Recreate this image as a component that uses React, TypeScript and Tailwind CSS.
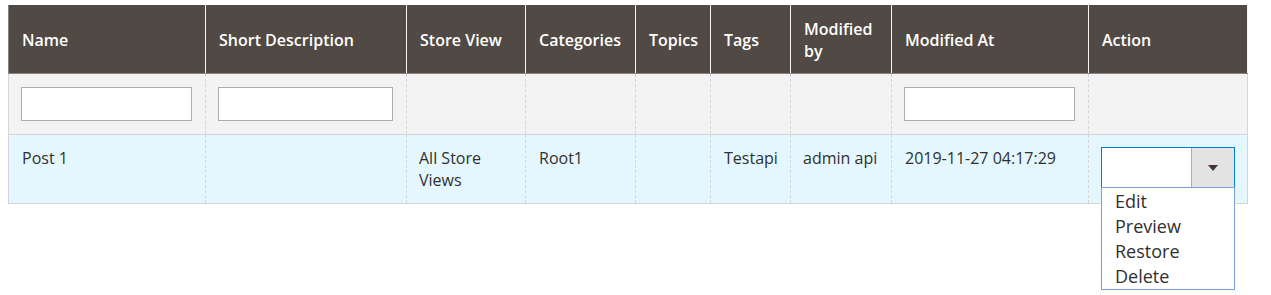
import React from "react";

const cols = "grid grid-cols-[197px_201px_119px_110px_75px_80px_101px_197px_160px]";

const headers = [
  "Name",
  "Short Description",
  "Store View",
  "Categories",
  "Topics",
  "Tags",
  "Modified by",
  "Modified At",
  "Action",
];

export default function App() {
  return (
    <div className="w-[1271px] h-[295px] bg-white font-['Open_Sans',sans-serif] text-[16px] leading-[22px] text-[#303030]">
      <div className="ml-[8px] pt-[5px] w-[1240px]">
        {/* header */}
        <div className={`${cols} bg-[#514943] border-b border-[#8a837f]`}>
          {headers.map((h, i) => (
            <div
              key={h}
              className={`h-[68px] flex items-center pt-[1px] px-[13px] text-white font-semibold ${
                i === 0 ? "border-l border-[#8a837f]" : "border-l border-[#f5f5f5]"
              } ${i === 8 ? "border-r border-r-[#f5f5f5]" : ""}`}
            >
              {h === "Modified by" ? (
                <span>
                  Modified
                  <br />
                  by
                </span>
              ) : (
                h
              )}
            </div>
          ))}
        </div>

        {/* filter row */}
        <div className={`${cols} bg-[#f3f3f3] border-b border-[#d6d6d6]`}>
          {headers.map((h, i) => (
            <div
              key={h}
              className={`h-[60px] pl-[12px] pr-[13px] py-[13px] ${
                i === 0
                  ? "border-l border-[#d6d6d6]"
                  : "border-l border-dashed border-[#d6d6d6]"
              } ${i === 8 ? "relative" : ""}`}
            >
              {(i === 0 || i === 1 || i === 7) && (
                <div className="h-[34px] w-full bg-white border border-[#adadad]" />
              )}
              {i === 8 && (
                <div className="absolute right-0 top-0 bottom-0 w-px bg-[#d6d6d6]" />
              )}
            </div>
          ))}
        </div>

        {/* data row */}
        <div className={`${cols} bg-[#e5f7fe] border-b border-[#d6d6d6]`}>
          <div className="h-[68px] px-[13px] py-[12px] border-l border-[#d6d6d6]">Post 1</div>
          <div className="px-[13px] py-[12px] border-l border-dashed border-[#d6d6d6]" />
          <div className="px-[12px] py-[12px] border-l border-dashed border-[#d6d6d6]">
            All Store
            <br />
            Views
          </div>
          <div className="px-[13px] py-[12px] border-l border-dashed border-[#d6d6d6]">Root1</div>
          <div className="px-[13px] py-[12px] border-l border-dashed border-[#d6d6d6]" />
          <div className="px-[13px] py-[12px] border-l border-dashed border-[#d6d6d6]">Testapi</div>
          <div className="px-[12px] py-[12px] border-l border-dashed border-[#d6d6d6]">admin api</div>
          <div className="px-[13px] py-[12px] border-l border-dashed border-[#d6d6d6]">2019-11-27 04:17:29</div>
          <div className="relative px-[12px] py-[12px] border-l border-dashed border-[#d6d6d6]">
            <div className="absolute right-0 top-0 bottom-0 w-px bg-[#d6d6d6]" />
            <div className="relative w-[134px]">
              <div className="h-[41px] flex bg-white border border-[#007bdb]">
                <div className="flex-1" />
                <div className="w-[43px] bg-[#e3e3e3] border-l border-[#adadad] flex items-center justify-center">
                  <svg width="10" height="6" viewBox="0 0 10 6">
                    <path d="M0 0 H10 L5 6 Z" fill="#41362f" />
                  </svg>
                </div>
              </div>
              <div className="absolute left-0 top-[40px] w-[134px] h-[103px] bg-white border border-[#7e9fd6] pt-[1px] z-10 text-[18px] leading-[25px] text-[#303030]">
                <div className="pl-[13px]">Edit</div>
                <div className="pl-[13px]">Preview</div>
                <div className="pl-[13px]">Restore</div>
                <div className="pl-[13px]">Delete</div>
              </div>
            </div>
          </div>
        </div>
      </div>
    </div>
  );
}
